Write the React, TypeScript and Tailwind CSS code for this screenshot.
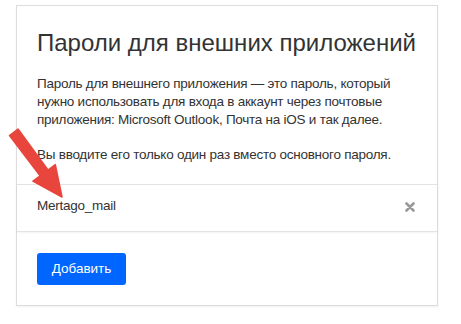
export default function App() {
  return (
    <div className="relative h-[324px] w-[461px] overflow-hidden bg-white font-['Liberation_Sans',Arial,sans-serif] text-[#333]">
      <div className="ml-[16px] mt-[5px] w-[422px] border border-[#ddd] bg-white shadow-[0_1px_2px_rgba(0,0,0,0.06)]">
        <div className="px-5 pt-[23px]">
          <h1 className="text-[24px] leading-[28px] font-normal">Пароли для внешних приложений</h1>
          <p className="mt-[18px] text-[13.5px] leading-[18px] tracking-[-0.25px]">
            Пароль для внешнего приложения — это пароль, который нужно использовать для входа в аккаунт через почтовые
            приложения: Microsoft Outlook, Почта на iOS и так далее.
          </p>
          <p className="mt-[17px] text-[13.5px] leading-[18px] tracking-[-0.25px]">
            Вы вводите его только один раз вместо основного пароля.
          </p>
        </div>

        <div className="mt-[20px] flex h-[48px] items-center justify-between border-y border-[#e3e3e3] pb-[3px] pl-5 pr-[22px] shadow-[0_1px_2px_rgba(0,0,0,0.05)]">
          <span className="text-[13.5px] tracking-[-0.25px]">Mertago_mail</span>
          <svg width="10" height="10" viewBox="0 0 10 10" className="text-[#999]">
            <path d="M1.5 1.5 L8.5 8.5 M8.5 1.5 L1.5 8.5" stroke="currentColor" strokeWidth="2.6" strokeLinecap="round" />
          </svg>
        </div>

        <div className="px-5 pb-[20px] pt-[21px]">
          <button className="h-[32px] w-[89px] rounded-[3px] bg-[#0066ff] text-[13.5px] text-white">Добавить</button>
        </div>
      </div>

      <svg className="absolute left-0 top-[120px]" width="80" height="90" viewBox="0 0 80 90">
        <path
          d="M9.5 15.5 L18 9 L48 50 L55.3 44.6 L62 77 L32.9 61.2 L40.1 55.9 Z"
          fill="#e8453c"
          stroke="#e8453c"
          strokeWidth="1.5"
          strokeLinejoin="round"
        />
      </svg>
    </div>
  );
}
